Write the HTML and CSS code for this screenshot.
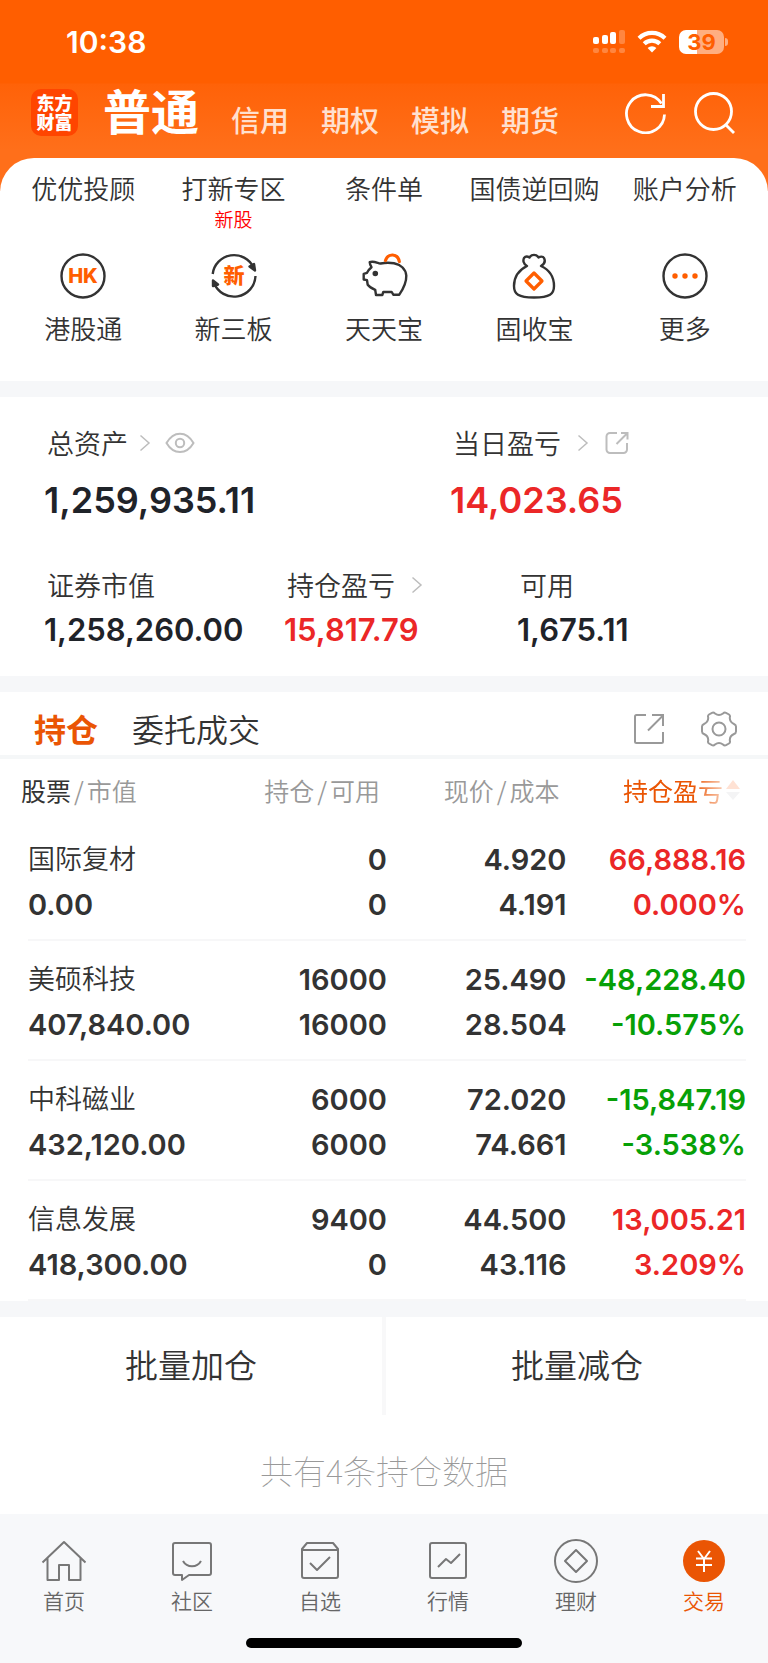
FILE: index.html
```html
<!DOCTYPE html>
<html lang="zh-CN">
<head>
<meta charset="utf-8">
<meta name="viewport" content="width=device-width, initial-scale=1">
<title>交易</title>
<link rel="stylesheet" href="styles.css">
</head>
<body>
<div class="app">
  <header class="header">
    <div class="status">
      <span class="time">10:38</span>
      <span class="indicators">
        <svg width="32" height="24" viewBox="0 0 32 24" fill="#fff" aria-hidden="true">
          <rect x="0" y="7" width="6" height="7" rx="2"/><rect x="9" y="5" width="6" height="9" rx="2"/><rect x="17" y="2" width="6" height="12" rx="2"/>
          <g opacity=".25"><rect x="26" y="0" width="6" height="14" rx="2"/><rect x="0" y="18" width="6" height="5" rx="2"/><rect x="9" y="18" width="6" height="5" rx="2"/><rect x="17" y="18" width="6" height="5" rx="2"/><rect x="26" y="18" width="6" height="5" rx="2"/></g>
        </svg>
        <svg width="30" height="24" viewBox="0 0 30 24" fill="none" stroke="#fff" stroke-width="4.2" aria-hidden="true">
          <path d="M2 8.300a18.500 18.500 0 0 1 26 0"/><path d="M7.200 13.800a11.200 11.200 0 0 1 15.600 0"/><path d="M15 22.500l-4.400-4.500a6.300 6.300 0 0 1 8.800 0z" fill="#fff" stroke="none"/>
        </svg>
        <span class="battery">39</span>
      </span>
    </div>
    <nav class="accounts">
      <a class="logo" href="#">东方财富</a>
      <a class="account current" href="#">普通</a>
      <a class="account" href="#">信用</a>
      <a class="account" href="#">期权</a>
      <a class="account" href="#">模拟</a>
      <a class="account" href="#">期货</a>
      <span class="header-tools">
        <button aria-label="刷新"><svg width="42" height="42" viewBox="0 0 42 42" fill="none" stroke="#fff" stroke-width="2.800"><path d="M39.500 22.500A19 19 0 1 1 36.500 11.500"/><path d="M38.500 2v12.500H26"/></svg></button>
        <button aria-label="搜索"><svg width="42" height="42" viewBox="0 0 42 42" fill="none" stroke="#fff" stroke-width="2.800"><circle cx="19.500" cy="19.500" r="18"/><path d="M31.500 32.500l8.500 8.500"/></svg></button>
      </span>
    </nav>
  </header>

  <main>
    <section class="services">
      <a href="#">优优投顾</a>
      <a href="#">打新专区<small>新股</small></a>
      <a href="#">条件单</a>
      <a href="#">国债逆回购</a>
      <a href="#">账户分析</a>
      <a href="#"><svg class="service-icon" viewBox="0 0 48 48"><circle cx="24" cy="24" r="21.500"/><text class="icon-hk" x="24" y="31" text-anchor="middle">HK</text></svg>港股通</a>
      <a href="#"><svg class="service-icon" viewBox="0 0 48 48"><path d="M2.700 22A21.500 21.500 0 0 1 43.500 15.500M45.500 24A21.500 21.500 0 0 1 4 31"/><path class="solid" d="M45 18.500l-5.500-4 4.500-2.500zM3 28.500l5 4-5 1.500z"/><text class="icon-new" x="24" y="31" text-anchor="middle">新</text></svg>新三板</a>
      <a href="#"><svg class="service-icon" viewBox="0 0 48 48"><path d="M9.700 10.200c2.500-1 5.500-.2 8 .6 1.200.6 2 .8 3 .7 4-.9 9-1 13.300-.3 7 1.300 11.800 6 12.300 12.500.2 7-3.300 13.500-7 19h-6L31.700 40h-8.400l-1 3H16l-.8-5.200c-3-1.200-6-3-7.500-5L7 28.200l-3.300-.7v-5.700l3.300-1c1-2.200 2.500-4 4.500-5.600-1-1.500-1.700-3.200-1.800-5z"/><circle class="solid" cx="15.300" cy="21.500" r="1.600"/><path class="accent" d="M25.500 8.500C28 1 37.500 1 39.300 9.500"/></svg>天天宝</a>
      <a href="#"><svg class="service-icon" viewBox="0 0 48 48"><path d="M17 14c-4-2-4-6-3-8 1.500-2 4-1.500 5.500-.5 2-3.500 7-3.500 9 0 1.500-1 4.500-1.500 5.500.5 1.500 3 .5 6-3 8 8.500 4 13 11 13 20 0 8-4 11.500-20 11.500S4 42 4 34c0-9 5-16 13-20z"/><path class="accent" d="M24 21l8 8-8 8-8-8z"/></svg>固收宝</a>
      <a href="#"><svg class="service-icon" viewBox="0 0 48 48"><circle cx="24" cy="24" r="21.500"/><g class="dots"><circle cx="14" cy="24" r="2.700"/><circle cx="24" cy="24" r="2.700"/><circle cx="34" cy="24" r="2.700"/></g></svg>更多</a>
    </section>

    <section class="assets">
      <div class="asset-row totals">
        <div>
          <h2>总资产 <svg class="chevron near" viewBox="0 0 12 18"><path d="M1.500 1.500L10 9l-8.500 7.500"/></svg>
            <button class="eye" aria-label="显示金额"><svg width="30" height="22" viewBox="0 0 30 22"><path d="M1.500 11c7-12.500 20-12.500 27 0-7 12-20 12-27 0z"/><circle cx="15" cy="11" r="4.200"/></svg></button></h2>
          <p>1,259,935.11</p>
        </div>
        <div>
          <h2>当日盈亏 <svg class="chevron" viewBox="0 0 12 18"><path d="M1.500 1.500L10 9l-8.500 7.500"/></svg>
            <button class="share" aria-label="分享"><svg width="24" height="24" viewBox="0 0 24 24"><path d="M12 2H5a3.500 3.500 0 0 0-3.500 3.500v13A3.500 3.500 0 0 0 5 22h13.500a3.500 3.500 0 0 0 3.500-3.500V12M16 2h6.500v6.500M22 2.500L11.500 13"/></svg></button></h2>
          <p class="up">14,023.65</p>
        </div>
      </div>
      <div class="asset-row details">
        <div><h2>证券市值</h2><p>1,258,260.00</p></div>
        <div><h2>持仓盈亏 <svg class="chevron" viewBox="0 0 12 18"><path d="M1.500 1.500L10 9l-8.500 7.500"/></svg></h2><p class="up">15,817.79</p></div>
        <div><h2>可用</h2><p>1,675.11</p></div>
      </div>
    </section>

    <section class="positions">
      <div class="tabs">
        <button class="tab active">持仓</button>
        <button class="tab">委托成交</button>
        <span class="tab-tools">
          <button aria-label="分享持仓"><svg width="32" height="32" viewBox="0 0 32 32"><path d="M13 2H3.500A1.500 1.500 0 0 0 2 3.500v25A1.500 1.500 0 0 0 3.500 30h25a1.500 1.500 0 0 0 1.500-1.500V19M19 2h11v11M30 2.500L15 17.500"/></svg></button>
          <button aria-label="设置"><svg width="36" height="36" viewBox="0 0 36 36"><path d="M11 1.800Q12.500 1 14 2.500Q18 5.500 22 2.500Q23.500 1 25 1.800L28 3.500Q29.500 4.500 28.800 6.500Q28.500 11 33 13Q35 13.800 35 15.500V20.500Q35 22.200 33 23Q28.500 25 28.800 29.500Q29.500 31.500 28 32.500L25 34.200Q23.500 35 22 33.500Q18 30.500 14 33.500Q12.500 35 11 34.200L8 32.500Q6.500 31.500 7.200 29.500Q7.500 25 3 23Q1 22.200 1 20.500V15.500Q1 13.800 3 13Q7.500 11 7.200 6.500Q6.500 4.500 8 3.500z" stroke-linejoin="round"/><circle cx="18" cy="18" r="6.500"/></svg></button>
        </span>
      </div>
      <table>
        <thead>
          <tr>
            <th scope="col"><span><b>股票</b><i>/</i>市值</span></th>
            <th scope="col">持仓<i>/</i>可用</th>
            <th scope="col">现价<i>/</i>成本</th>
            <th scope="col" class="sorted"><button><span class="fade">持仓盈亏</span><svg width="16" height="22" viewBox="0 0 16 22"><path d="M1 10l7-9 7 9z" fill="#ffe2d4"/><path d="M1 13l7 8 7-8z" fill="#f4f4f5"/></svg></button></th>
          </tr>
        </thead>
        <tbody>
          <tr><td><strong>国际复材</strong><span>0.00</span></td><td><span>0</span><span>0</span></td><td><span>4.920</span><span>4.191</span></td><td class="up"><span>66,888.16</span><span>0.000%</span></td></tr>
          <tr><td><strong>美硕科技</strong><span>407,840.00</span></td><td><span>16000</span><span>16000</span></td><td><span>25.490</span><span>28.504</span></td><td class="down"><span>-48,228.40</span><span>-10.575%</span></td></tr>
          <tr><td><strong>中科磁业</strong><span>432,120.00</span></td><td><span>6000</span><span>6000</span></td><td><span>72.020</span><span>74.661</span></td><td class="down"><span>-15,847.19</span><span>-3.538%</span></td></tr>
          <tr><td><strong>信息发展</strong><span>418,300.00</span></td><td><span>9400</span><span>0</span></td><td><span>44.500</span><span>43.116</span></td><td class="up"><span>13,005.21</span><span>3.209%</span></td></tr>
        </tbody>
      </table>
    </section>

    <div class="batch">
      <button>批量加仓</button>
      <button>批量减仓</button>
    </div>
    <p class="summary">共有4条持仓数据</p>
  </main>

  <footer class="bottom">
    <nav class="tabbar">
      <a href="#"><svg viewBox="0 0 46 46"><path d="M1.500 24.500L23 4l21.500 20.500M6.500 20v22H18V27h10v15h11.500V20"/></svg>首页</a>
      <a href="#"><svg viewBox="0 0 46 46"><path d="M6 5h34a2 2 0 0 1 2 2v28a2 2 0 0 1-2 2H20l-7 5v-5H6a2 2 0 0 1-2-2V7a2 2 0 0 1 2-2z"/><path d="M14 23c4 7 14 7 18 0"/></svg>社区</a>
      <a href="#"><svg viewBox="0 0 46 46"><path d="M5 11l5-6h26l5 6v27a2 2 0 0 1-2 2H7a2 2 0 0 1-2-2zM5 12h36M13 25l7 7 13-13"/></svg>自选</a>
      <a href="#"><svg viewBox="0 0 46 46"><rect x="5" y="5" width="36" height="35" rx="2"/><path d="M13 29l8-8 5 4 9-9"/></svg>行情</a>
      <a href="#"><svg viewBox="0 0 46 46"><circle cx="23" cy="23" r="21"/><path d="M23 12l11 11-11 11-11-11z"/></svg>理财</a>
      <a href="#" class="active"><svg viewBox="0 0 46 46"><circle cx="23" cy="23" r="21"/><path class="yen" d="M17 13l6 8 6-8M23 21v13M15 20.500h16M15 27h16"/></svg>交易</a>
    </nav>
    <div class="home-bar"></div>
  </footer>
</div>
</body>
</html>
```

FILE: styles.css
```css
* { box-sizing: border-box; }

body {
  margin: 0;
  background: #fff;
  color: #333;
  font-family: "Noto Sans CJK SC", sans-serif;
  font-weight: 350;
}

a { color: inherit; text-decoration: none; }

button {
  margin: 0;
  padding: 0;
  border: 0;
  background: none;
  color: inherit;
  font: inherit;
}

svg { display: block; flex: none; }
h2, p { margin: 0; font-weight: inherit; }

.app { display: flex; flex-direction: column; min-height: 100vh; }

/* Header */
.header {
  height: 191px;
  background: linear-gradient(#ff5e00 83px, #ff6208 84px, #ff6f1a 150px);
  color: #fff;
}

.status {
  display: flex;
  align-items: center;
  justify-content: space-between;
  height: 83px;
  padding: 0 44px 0 66px;
  font-family: Inter, sans-serif;
}

.time { font-size: 30px; font-weight: 600; }
.indicators { display: flex; align-items: center; gap: 12px; }

.battery {
  position: relative;
  width: 45px;
  border-radius: 7px;
  background: linear-gradient(90deg, #fff 40%, #ffae80 40%);
  color: #ff5e00;
  font-size: 22px;
  font-weight: 700;
  line-height: 24px;
  text-align: center;
}

.battery::after {
  content: "";
  position: absolute;
  top: 8px;
  right: -4px;
  width: 3px;
  height: 8px;
  border-radius: 0 3px 3px 0;
  background: #ffae80;
}

.accounts {
  display: flex;
  align-items: flex-end;
  gap: 32px;
  height: 57px;
  padding: 0 32px 0 31px;
}

.logo {
  width: 47px;
  height: 47px;
  margin: 0 -7px 4px 0;
  padding: 4px 5px;
  border-radius: 10px;
  background: #ff4500;
  font-size: 18px;
  font-weight: 900;
  line-height: 19px;
  text-align: center;
}

.account { color: #ffe0cf; font-size: 29px; font-weight: 500; line-height: 42px; }
.account.current { color: #fff; font-size: 48px; font-weight: 700; line-height: 62px; }
.header-tools { display: flex; gap: 27px; margin: 0 0 6px auto; }

/* Services */
.services {
  display: grid;
  grid-template-columns: repeat(5, 1fr);
  grid-template-rows: 83px auto;
  margin-top: -33px;
  padding: 11px 8px 34px;
  border-radius: 34px 34px 0 0;
  background: #fff;
  font-size: 26px;
  line-height: 38px;
  text-align: center;
}

.services a { white-space: nowrap; }
.services small { display: block; color: #f00; font-size: 19px; line-height: 24px; }

.service-icon {
  width: 48px;
  height: 48px;
  margin: 0 auto 9px;
  fill: none;
  stroke: #333;
  stroke-width: 2.400;
  stroke-linejoin: round;
}

.service-icon text { fill: #ff5e00; stroke: none; }
.service-icon .solid { fill: #333; }
.service-icon .accent { stroke: #ff5e00; stroke-width: 3.200; stroke-linecap: round; }
.service-icon .dots { fill: #ff5e00; stroke: none; }
.icon-hk { font-family: Inter, sans-serif; font-size: 20px; font-weight: 800; }
.icon-new { font-size: 21px; font-weight: 900; }

/* Assets */
.assets {
  padding: 26px 44px 21px;
  border-top: 16px solid #f6f7f9;
  border-bottom: 16px solid #f6f7f9;
}

.asset-row { display: grid; }
.totals { grid-template-columns: 406fr 274fr; margin-bottom: 28px; }
.details { grid-template-columns: 240fr 233fr 207fr; }

.assets h2 {
  display: flex;
  align-items: center;
  padding-left: 3px;
  font-size: 27px;
  line-height: 40px;
}

.assets p {
  color: #1f2329;
  font-family: Inter, sans-serif;
  font-size: 31px;
  font-weight: 600;
  line-height: 50px;
}

.assets .totals p { font-size: 36px; line-height: 74px; }
.assets .up, .up { color: #eb2727; }
.down { color: #07a007; }

.chevron {
  width: 12px;
  height: 18px;
  margin-left: 16px;
  fill: none;
  stroke: #bdbdbd;
  stroke-width: 1.500;
}

.chevron.near { margin-left: 11px; }
.eye { margin-left: 14px; }
.share { margin-left: 16px; }
.eye svg, .share svg { fill: none; stroke: #bdbdbd; stroke-width: 2; }

/* Positions */
.positions { border-bottom: 16px solid #f6f7f9; }

.tabs {
  display: flex;
  align-items: center;
  gap: 34px;
  height: 67px;
  padding: 8px 31px 0 34px;
  border-bottom: 4px solid #f5f7f8;
}

.tab { font-size: 32px; line-height: 46px; }
.tab.active { color: #ea5504; font-weight: 700; }

.tab-tools {
  display: flex;
  align-items: center;
  gap: 36px;
  margin-left: auto;
  padding-top: 2px;
}

.tab-tools svg { fill: none; stroke: #999; stroke-width: 2; }

table {
  width: calc(100% - 50px);
  margin: 0 22px 0 28px;
  border-collapse: separate;
  border-spacing: 0;
  table-layout: fixed;
}

th {
  height: 62px;
  padding: 0 7px 0 0;
  color: #999;
  font-size: 25px;
  font-weight: 350;
  line-height: 36px;
  text-align: right;
  white-space: nowrap;
}

th:first-child { text-align: left; }
th:first-child span { margin-left: -7px; }
th b { color: #333; font-weight: 400; }
th i { padding: 0 3px; font-style: normal; }
.sorted { padding-right: 5px; color: #ea5504; }
.sorted button { display: inline-flex; align-items: center; gap: 2px; font-weight: 400; }
.fade {
  -webkit-mask-image: linear-gradient(90deg, #000 70%, rgba(0, 0, 0, .3));
  mask-image: linear-gradient(90deg, #000 70%, rgba(0, 0, 0, .3));
}

td {
  padding: 16px 0 12px;
  border-bottom: 2px solid #f7f7f8;
  font-family: Inter, "Noto Sans CJK SC", sans-serif;
  font-size: 29px;
  font-weight: 600;
  text-align: right;
}

td:first-child { text-align: left; }
td strong, td span { display: block; line-height: 45px; }
td strong {
  padding-bottom: 4px;
  font-family: "Noto Sans CJK SC", sans-serif;
  font-size: 27px;
  font-weight: 350;
  line-height: 41px;
}

/* Batch actions */
.batch {
  display: grid;
  grid-template-columns: 1fr 1fr;
  gap: 4px;
  background: #f8f8f9;
}

.batch button { height: 98px; padding-bottom: 4px; background: #fff; font-size: 33px; }

.summary {
  padding: 32px 0 21px;
  color: #999;
  font-size: 33px;
  font-weight: 100;
  line-height: 46px;
  text-align: center;
}

/* Bottom bar */
.bottom { margin-top: auto; padding: 24px 0 16px; background: #f7f8fa; }
.tabbar { display: grid; grid-template-columns: repeat(6, 1fr); }

.tabbar a {
  display: flex;
  flex-direction: column;
  align-items: center;
  color: #666;
  font-size: 21px;
  line-height: 32px;
}

.tabbar svg {
  width: 46px;
  height: 46px;
  fill: none;
  stroke: #777;
  stroke-width: 2;
  stroke-linejoin: round;
}

.tabbar .active { color: #ea5504; }
.tabbar .active circle { fill: #ea5504; stroke: none; }
.tabbar .yen { stroke: #fff; }

.home-bar {
  width: 36%;
  height: 10px;
  margin: 22px auto 0;
  border-radius: 5px;
  background: #000;
}
```
